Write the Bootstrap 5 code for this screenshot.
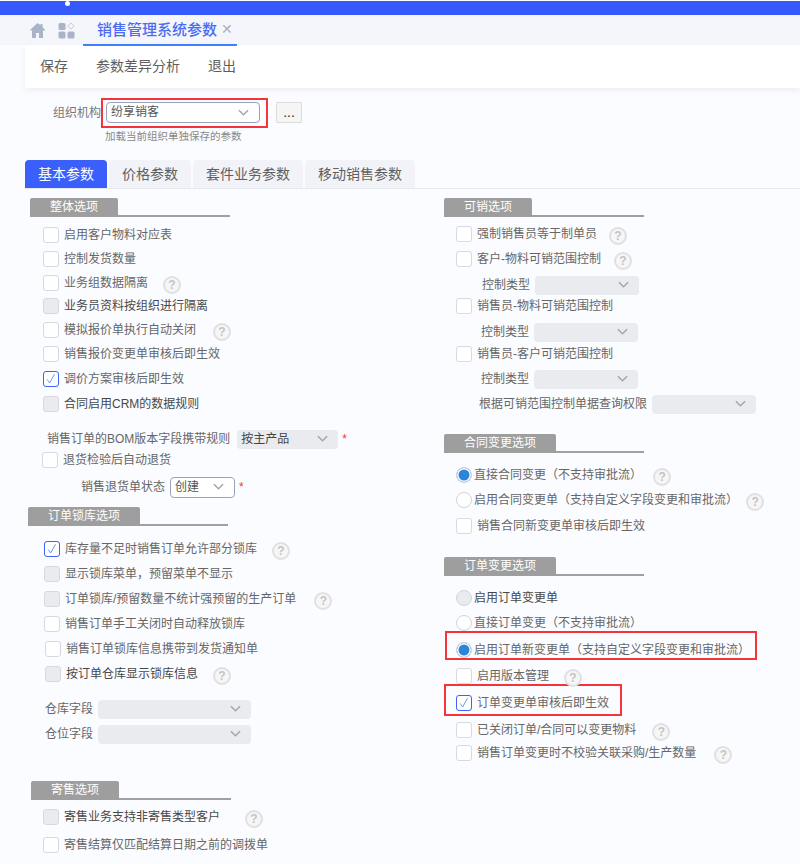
<!DOCTYPE html>
<html lang="zh">
<head>
<meta charset="utf-8">
<title>销售管理系统参数</title>
<link href="https://cdn.jsdelivr.net/npm/bootstrap@5.3.0/dist/css/bootstrap.min.css" rel="stylesheet">
<style>
html,body{height:864px;overflow:hidden}
body{background:#fbfcff;font-family:"Liberation Sans","Noto Sans CJK SC",sans-serif;font-size:12px;color:#666;line-height:1.2;text-spacing-trim:space-all}
.midp{font-family:"Noto Sans CJK TC",sans-serif}
.topstrip{height:14px;background:#3559fb;padding-left:65px}
.topdot{width:5px;height:5px;border-radius:50%;background:#fff;margin-top:1px}
.tabstrip{height:30px;background:#f4f6fb;padding-left:29px}
.apps{margin-left:12px}
.pagetab{margin-left:8px;width:154px;height:31px;padding-left:14px;border-bottom:2px solid #4080ff;color:#4a6cf2;font-size:15px;font-weight:500;align-self:flex-start}
.tabx{color:#a9b0c0;margin-left:4px;font-size:14px;font-weight:400}
.toolbar{margin-left:25px;height:43px;background:#fff;box-shadow:0 3px 6px rgba(60,70,100,.07);padding-left:15px;gap:28px;font-size:14px;color:#5f5f5f}
.orgrow{margin-top:10px;padding-left:53px}
.orglabel{width:48px;color:#777}
.redbox{border:2px solid #f5343a}
.orgbox{height:30px;width:167px;padding-left:3px}
.morebtn{width:26px;height:21px;margin:4px 0 0 8px;padding:0;border:1px solid #dcdcdc;border-radius:1px;background:#f5f5f5;color:#333;font-size:14px;line-height:17px}
.orghint{margin:1px 0 0 105px;font-size:10.5px;color:#888;line-height:14px}
.paramtabs{margin:17px 0 0 25px;border-bottom:1px solid #e6e8ef;gap:2px;height:29px}
.paramtabs .nav-link{height:28px;padding:0 13px;border-radius:4px 4px 0 0;background:#f1f3f8;color:#5f5f5f;font-size:14px;line-height:28px}
.paramtabs .nav-link.active{background:#3b5ffb;color:#fff}
.leftcol{width:444px}
.rightcol{width:356px}
.cols{margin-top:9px}
.sechead{width:200px;height:19px;border-bottom:2px solid #a0a0a0}
.sechead span{display:inline-block;height:19px;padding:0 20px;background:#9e9e9e;color:#fff;line-height:19px;border-radius:2px 2px 0 0}
.x28{margin-left:28px}.x30{margin-left:30px}.x31{margin-left:31px}
.opt{height:24px;display:flex;align-items:center;white-space:pre}
.optl{margin-left:43px}.optl42{margin-left:42px}.optl44{margin-left:44px}.optl45{margin-left:45px}
.optr{margin-left:12px}
.form-check-input{flex:none;width:16px;height:16px;margin:0 5px 0 0;border:1px solid #d6d9df;background-color:#fff}
.form-check-input[type=checkbox]{border-radius:3px}
.form-check-input:disabled{opacity:1;background-color:#e9ebef}
.form-check-input[type=checkbox]:checked{background-color:#fff;border-color:#3b66f5;background-size:14px;background-image:url("data:image/svg+xml,%3csvg xmlns='http://www.w3.org/2000/svg' viewBox='0 0 16 16'%3e%3cpath d='M3.5 8.5l3 4 5.5-10' fill='none' stroke='%235f82e8' stroke-width='1'/%3e%3c/svg%3e")}
.form-check-input[type=radio]{margin-right:2px;border-color:#d0d4da}
.form-check-input[type=radio]:checked{background-image:none;background-color:#2b86d9;border-color:#d0d4da;box-shadow:inset 0 0 0 1.5px #fff}
.strong{color:#484848}
.helpdot{flex:none;display:inline-block;width:18px;height:18px;margin:4px 0 0 15px;border:2px solid #e0e0e0;border-radius:50%;background:#f6f6f6;color:#c4c4c4;font:bold 12px/14px "Liberation Sans",sans-serif;text-align:center}
.g8{margin-left:8px}.g11{margin-left:11px}.g12{margin-left:12px}.g13{margin-left:13px}.g14{margin-left:14px}.g16{margin-left:16px}.g17{margin-left:17px}.g18{margin-left:18px}.g25{margin-left:25px}
.form-select.pick{width:auto;height:19px;padding:0 20px 0 4px;border:0;border-radius:4px;background-color:#e9ebef;color:#444;font-size:12px;line-height:19px;background-position:right 10px center;background-size:11px;box-shadow:none;opacity:1;background-image:url("data:image/svg+xml,%3csvg xmlns='http://www.w3.org/2000/svg' viewBox='0 0 12 8'%3e%3cpath d='M1 1.5l5 5 5-5' fill='none' stroke='%23a2a6ad' stroke-width='1.6'/%3e%3c/svg%3e")}
.form-select.live{height:21px;border:1px solid #9aa3ba;background-color:#fff;color:#555;padding-left:4px}
.w65{width:65px!important}.w101{width:101px!important}.w104{width:104px!important}.w153{width:153px!important}.w154{width:154px!important;margin-top:2px}
.lab{margin-right:5px}
.lab7{margin-right:7px}
.ml38{margin-left:38px}.ml37{margin-left:37px}.ml35{margin-left:35px}.ml47{margin-left:47px}.ml81{margin-left:81px}.ml45{margin-left:45px}
.req{color:#f5343a;margin-left:4px}
.y-4{margin-top:-4px}.y-3{margin-top:-3px}.y-2{margin-top:-2px}.y-1{margin-top:-1px}.y1{margin-top:1px}.y2{margin-top:2px}.y3{margin-top:3px}.y4{margin-top:4px}.y5{margin-top:5px}.y6{margin-top:6px}.y8{margin-top:8px}.y10{margin-top:10px}.y11{margin-top:11px}.y18{margin-top:18px}.y19{margin-top:19px}.y35{margin-top:35px}
.redrow{margin-left:1px;display:flex;white-space:nowrap}
.redrow1{width:312px;height:29px;padding:5px 0 0 9px}
.redrow2{width:178px;height:32px;margin-left:0;padding:5px 0 0 10px}
</style>
</head>
<body>
<div class="topstrip"><div class="topdot"></div></div>
<div class="tabstrip d-flex align-items-center">
  <svg width="17" height="17" viewBox="0 0 17 17"><path d="M8.5 1L0.5 8.5h2.5V16h4v-5h3v5h4V8.5h2.5L13.5 5V2h-2v1.2z" fill="#aab4c8"/></svg>
  <svg class="apps" width="17" height="17" viewBox="0 0 17 17"><rect x="0.5" y="1" width="7" height="7" rx="1.6" fill="#aab4c8"/><rect x="0.5" y="9.5" width="7" height="7" rx="1.6" fill="#aab4c8"/><rect x="9.5" y="9.5" width="7" height="7" rx="1.6" fill="#aab4c8"/><path d="M13 0.8l3.2 3.2-3.2 3.2L9.8 4z" fill="none" stroke="#c3cad8"/></svg>
  <div class="pagetab d-flex align-items-center">销售管理系统参数<span class="tabx">✕</span></div>
</div>
<div class="toolbar d-flex align-items-center"><span>保存</span><span>参数差异分析</span><span>退出</span></div>

<div class="orgrow d-flex align-items-start">
  <span class="orglabel y8">组织机构</span>
  <div class="redbox orgbox">
    <select class="form-select pick live w154"><option>纷享销客</option></select>
  </div>
  <button type="button" class="btn morebtn">...</button>
</div>
<div class="orghint">加载当前组织单独保存的参数</div>

<ul class="nav paramtabs">
  <li class="nav-item"><a class="nav-link active" href="#">基本参数</a></li>
  <li class="nav-item"><a class="nav-link" href="#">价格参数</a></li>
  <li class="nav-item"><a class="nav-link" href="#">套件业务参数</a></li>
  <li class="nav-item"><a class="nav-link" href="#">移动销售参数</a></li>
</ul>

<div class="cols d-flex">
  <div class="leftcol">
    <div class="sechead x30"><span>整体选项</span></div>
    <div class="opt optl y6"><input class="form-check-input" type="checkbox">启用客户物料对应表</div>
    <div class="opt optl"><input class="form-check-input" type="checkbox">控制发货数量</div>
    <div class="opt optl"><input class="form-check-input" type="checkbox">业务组数据隔离<span class="helpdot">?</span></div>
    <div class="opt optl y-1 strong"><input class="form-check-input" type="checkbox" disabled>业务员资料按组织进行隔离</div>
    <div class="opt optl"><input class="form-check-input" type="checkbox">模拟报价单执行自动关闭<span class="helpdot g17">?</span></div>
    <div class="opt optl"><input class="form-check-input" type="checkbox">销售报价变更单审核后即生效</div>
    <div class="opt optl y1"><input class="form-check-input" type="checkbox" checked>调价方案审核后即生效</div>
    <div class="opt optl y1 strong"><input class="form-check-input" type="checkbox" disabled>合同启用CRM的数据规则</div>
    <div class="opt ml47 y11"><span class="lab7">销售订单的BOM版本字段携带规则</span><select class="form-select pick w101" disabled><option>按主产品</option></select><span class="req">*</span></div>
    <div class="opt optl42 y-3"><input class="form-check-input" type="checkbox">退货检验后自动退货</div>
    <div class="opt ml81 y3"><span class="lab">销售退货单状态</span><select class="form-select pick live w65"><option>创建</option></select><span class="req">*</span></div>

    <div class="sechead x28 y8"><span>订单锁库选项</span></div>
    <div class="opt optl44 y11"><input class="form-check-input" type="checkbox" checked>库存量不足时销售订单允许部分锁库<span class="helpdot">?</span></div>
    <div class="opt optl44 y1"><input class="form-check-input" type="checkbox" disabled><span>显示锁库菜单<span class="midp">，</span>预留菜单不显示</span></div>
    <div class="opt optl44 y1"><input class="form-check-input" type="checkbox" disabled>订单锁库/预留数量不统计强预留的生产订单<span class="helpdot g18">?</span></div>
    <div class="opt optl44 y1"><input class="form-check-input" type="checkbox">销售订单手工关闭时自动释放锁库</div>
    <div class="opt optl45 y1"><input class="form-check-input" type="checkbox">销售订单锁库信息携带到发货通知单</div>
    <div class="opt optl45 y1 strong"><input class="form-check-input" type="checkbox" disabled>按订单仓库显示锁库信息<span class="helpdot">?</span></div>
    <div class="opt ml45 y11"><span class="lab">仓库字段</span><select class="form-select pick w153" disabled><option></option></select></div>
    <div class="opt ml45 y1"><span class="lab">仓位字段</span><select class="form-select pick w153" disabled><option></option></select></div>

    <div class="sechead x31 y35"><span>寄售选项</span></div>
    <div class="opt optl y5 strong"><input class="form-check-input" type="checkbox" disabled>寄售业务支持非寄售类型客户<span class="helpdot g25">?</span></div>
    <div class="opt optl y4"><input class="form-check-input" type="checkbox">寄售结算仅匹配结算日期之前的调拨单</div>
  </div>

  <div class="rightcol">
    <div class="sechead"><span>可销选项</span></div>
    <div class="opt optr y5"><input class="form-check-input" type="checkbox">强制销售员等于制单员<span class="helpdot g12">?</span></div>
    <div class="opt optr y1"><input class="form-check-input" type="checkbox">客户-物料可销范围控制<span class="helpdot g13">?</span></div>
    <div class="opt ml38 y2"><span class="lab">控制类型</span><select class="form-select pick w104" disabled><option></option></select></div>
    <div class="opt optr y-3"><input class="form-check-input" type="checkbox">销售员-物料可销范围控制</div>
    <div class="opt ml37 y2"><span class="lab">控制类型</span><select class="form-select pick w104" disabled><option></option></select></div>
    <div class="opt optr y-2"><input class="form-check-input" type="checkbox">销售员-客户可销范围控制</div>
    <div class="opt ml37 y1"><span class="lab">控制类型</span><select class="form-select pick w104" disabled><option></option></select></div>
    <div class="opt ml35 y1"><span class="lab">根据可销范围控制单据查询权限</span><select class="form-select pick w104" disabled><option></option></select></div>

    <div class="sechead y18"><span>合同变更选项</span></div>
    <div class="opt optr y10"><input class="form-check-input" type="radio" name="ct" checked><span>直接合同变更<span class="midp">（</span>不支持审批流<span class="midp">）</span></span><span class="helpdot g11">?</span></div>
    <div class="opt optr y1"><input class="form-check-input" type="radio" name="ct"><span>启用合同变更单<span class="midp">（</span>支持自定义字段变更和审批流<span class="midp">）</span></span><span class="helpdot g8">?</span></div>
    <div class="opt optr y2"><input class="form-check-input" type="checkbox">销售合同新变更单审核后即生效</div>

    <div class="sechead y19"><span>订单变更选项</span></div>
    <div class="opt optr y10 strong"><input class="form-check-input" type="radio" name="od" disabled>启用订单变更单</div>
    <div class="opt optr y1"><input class="form-check-input" type="radio" name="od"><span>直接订单变更<span class="midp">（</span>不支持审批流<span class="midp">）</span></span></div>
    <div class="redbox redrow redrow1 y-4"><div class="opt"><input class="form-check-input" type="radio" name="od" checked><span>启用订单新变更单<span class="midp">（</span>支持自定义字段变更和审批流<span class="midp">）</span></span></div></div>
    <div class="opt optr y4"><input class="form-check-input" type="checkbox">启用版本管理<span class="helpdot">?</span></div>
    <div class="redbox redrow redrow2 y-4"><div class="opt"><input class="form-check-input" type="checkbox" checked>订单变更单审核后即生效</div></div>
    <div class="opt optr y2"><input class="form-check-input" type="checkbox">已关闭订单/合同可以变更物料<span class="helpdot g16">?</span></div>
    <div class="opt optr y-1"><input class="form-check-input" type="checkbox">销售订单变更时不校验关联采购/生产数量<span class="helpdot g18">?</span></div>
  </div>
</div>
<script src="https://cdn.jsdelivr.net/npm/bootstrap@5.3.0/dist/js/bootstrap.bundle.min.js"></script>
</body>
</html>
